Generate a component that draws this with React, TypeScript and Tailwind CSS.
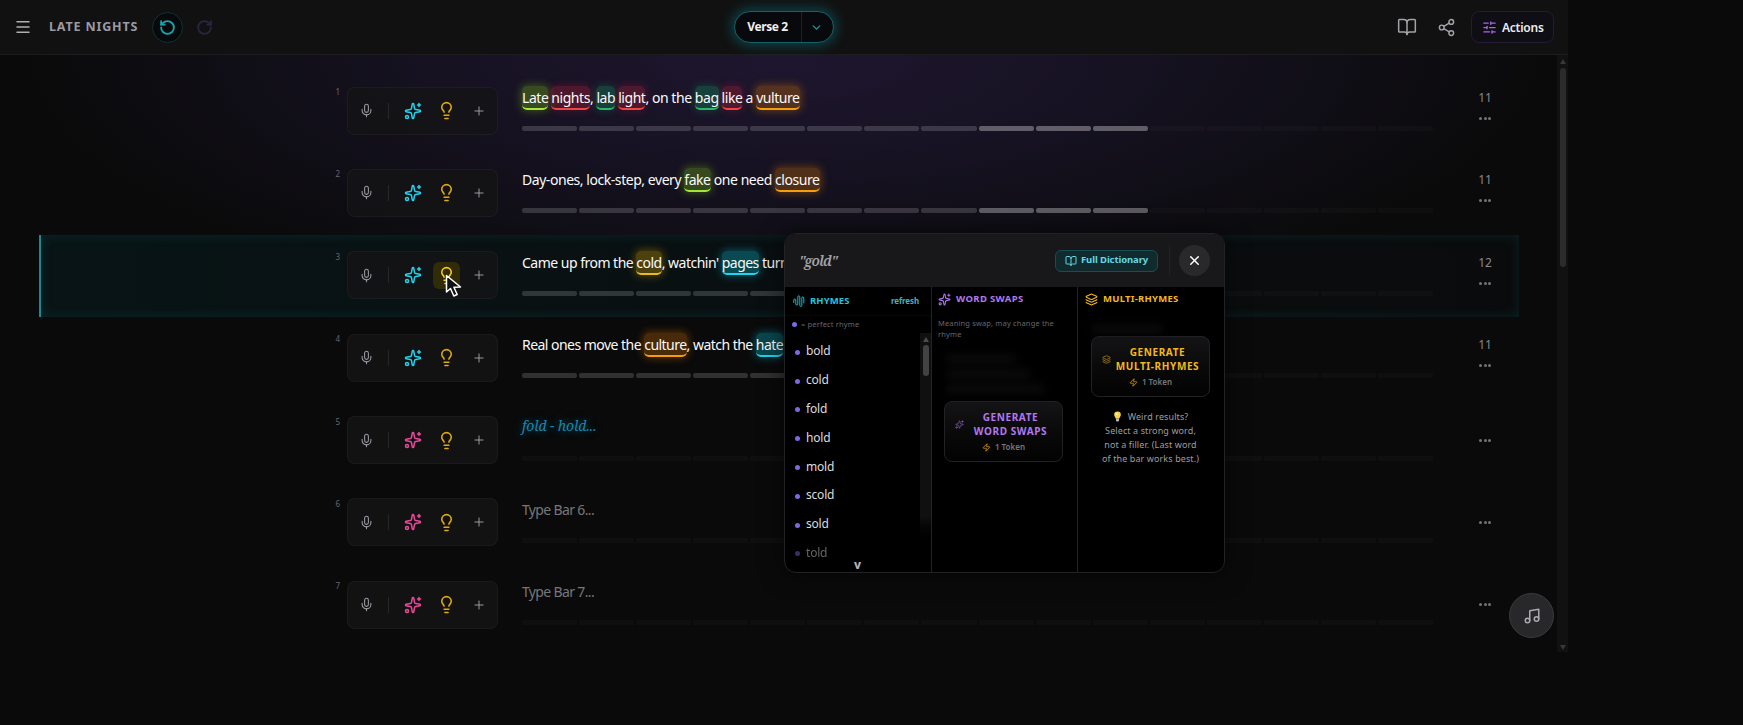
import clsx from 'clsx';
import {
    BookOpen,
    ChevronDown,
    Layers,
    Lightbulb,
    Menu,
    Mic,
    Music,
    Plus,
    RotateCcw,
    RotateCw,
    Share2,
    SlidersHorizontal,
    Sparkles,
    X,
    Zap,
} from 'lucide-react';

type Tone = 'lime' | 'red' | 'green' | 'orange' | 'yellow' | 'cyan';
type Word = string | [string, Tone, string];

interface Bar {
    words?: Word[];
    tracking?: string;
    hint?: string;
    placeholder?: string;
    count?: number;
    active?: boolean;
}

const TONES: Record<Tone, string> = {
    lime: 'bg-[#84cc16]/30 border-[#a3e635] shadow-[0_0_8px_1px_rgba(132,204,22,0.35)]',
    red: 'bg-[#dc2640]/27 border-[#ef4444] shadow-[0_0_8px_1px_rgba(225,29,72,0.22)]',
    green: 'bg-[#10b971]/27 border-[#2fb36c] shadow-[0_0_8px_1px_rgba(16,185,129,0.22)]',
    orange: 'bg-[#d97706]/30 border-[#f59e0b] shadow-[0_0_8px_1px_rgba(217,119,6,0.4)]',
    yellow: 'bg-[#ca9a04]/35 border-[#eab92b] shadow-[0_0_8px_1px_rgba(202,154,4,0.4)]',
    cyan: 'bg-[#0891a2]/45 border-[#22d3ee] shadow-[0_0_8px_1px_rgba(6,182,212,0.4)]',
};

// highlighted words are [text, tone, spacing]
const BARS: Bar[] = [
    {
        words: [
            ['Late', 'lime', 'mr-[3px]'], ['nights', 'red', ''], ', ', ['lab', 'green', 'mr-[3px]'], ['light', 'red', ''],
            ', on the ', ['bag', 'green', 'mr-[3px]'], ['like', 'red', ''], ' a ', ['vulture', 'orange', ''],
        ],
        tracking: 'tracking-[-0.45px]',
        count: 11,
    },
    {
        words: ['Day-ones, lock-step, every ', ['fake', 'lime', ''], ' one need ', ['closure', 'orange', '']],
        tracking: 'tracking-[-0.45px]',
        count: 11,
    },
    {
        words: ['Came up from the ', ['cold', 'yellow', ''], ", watchin' ", ['pages', 'cyan', ''], ' turn'],
        tracking: 'tracking-[-0.51px]',
        count: 12,
        active: true,
    },
    {
        words: ['Real ones move the ', ['culture', 'orange', ''], ', watch the ', ['hate', 'cyan', '']],
        tracking: 'tracking-[-0.53px]',
        count: 11,
    },
    { hint: 'fold - hold...' },
    { placeholder: 'Type Bar 6...' },
    { placeholder: 'Type Bar 7...' },
];

const RHYMES = ['bold', 'cold', 'fold', 'hold', 'mold', 'scold', 'sold', 'told'];

function Header() {
    return (
        <header className="flex h-[55px] items-center justify-between border-b border-[#1d1d20] bg-[#111111] px-[14px]">
            <div className="flex w-[600px] items-center">
                <Menu className="size-[18px] text-[#b0b0b4]" strokeWidth={2} />
                <h1 className="ml-[17px] w-[89px] whitespace-nowrap text-[12.5px] font-bold tracking-[0.85px] text-[#9b9ba2]">LATE NIGHTS</h1>
                <button className="ml-[14px] flex size-[31px] items-center justify-center rounded-full border border-[#0f3336] bg-[#07090b]">
                    <RotateCcw className="size-[17px] text-[#1ba3ae]" strokeWidth={2.6} />
                </button>
                <button className="ml-[6px] flex size-[30px] items-center justify-center">
                    <RotateCw className="size-[17px] text-[#2c2440]" strokeWidth={2.6} />
                </button>
            </div>
            <div className="flex h-8 w-[100px] items-center rounded-full border border-[#17606a] bg-[#08090c] shadow-[0_0_12px_3px_rgba(8,145,160,0.38)]">
                <span className="w-[66px] pr-px text-center text-[12px] font-bold tracking-[-0.4px] text-[#f1f1f3]">Verse 2</span>
                <span className="h-full w-px bg-[#14262b]" />
                <ChevronDown className="ml-[8px] size-[13px] text-[#1d9aa5]" strokeWidth={2.4} />
            </div>
            <div className="flex w-[600px] items-center justify-end">
                <BookOpen className="size-[20px] text-[#a3a3aa]" strokeWidth={1.8} />
                <Share2 className="ml-[20px] mr-px size-[19px] text-[#a3a3aa]" strokeWidth={1.8} />
                <button className="ml-[14px] flex h-8 w-[83px] items-center rounded-lg border border-[#231c33] bg-[#100e15] pl-[10px]">
                    <SlidersHorizontal className="size-[15px] text-[#a368e8]" />
                    <span className="ml-[5px] pt-px text-[12px] font-semibold tracking-[-0.25px] text-[#ececee]">Actions</span>
                </button>
            </div>
        </header>
    );
}

function Tools({ filled, active }: { filled: boolean; active?: boolean }) {
    return (
        <div className="mt-[16.5px] flex h-[48px] w-[151px] items-center rounded-lg border border-white/4 bg-[#141415]/80">
            <Mic className="ml-[11px] size-[15px] text-[#9c9ca3]" strokeWidth={1.7} />
            <span className="ml-[14px] h-4 w-px bg-[#27272a]" />
            <Sparkles className={clsx('ml-[14.5px] size-[18px]', filled ? 'text-[#22d3ee]' : 'text-[#ec4899]')} />
            <span className={clsx('ml-[11.5px] flex size-[27px] items-center justify-center rounded-md', active && 'bg-[#322b08]')}>
                <Lightbulb className={clsx('size-[19px]', active ? 'text-[#facc15]' : 'text-[#e0aa10]')} />
            </span>
            <Plus className="ml-[11.5px] size-[14px] text-[#a1a1aa]" strokeWidth={1.6} />
        </div>
    );
}

function Segments({ filled }: { filled: number }) {
    return (
        <div className="mt-[16px] grid h-[5px] w-[911px] grid-cols-16 gap-[2px]">
            {Array.from({ length: 16 }, (_, i) => (
                <span
                    key={i}
                    className={clsx('rounded-[2px]', i >= filled ? 'bg-white/[0.022]' : i >= 8 ? 'bg-white/[0.32]' : 'bg-white/[0.16]')}
                />
            ))}
        </div>
    );
}

function BarRow({ bar, index }: { bar: Bar; index: number }) {
    return (
        <div
            className={clsx(
                'flex h-[82.4px] w-[1480px] border-l-2',
                bar.active
                    ? 'border-[#1a8995] bg-linear-to-r from-[#081416] to-[#0a0b0c] shadow-[inset_0_0_12px_rgba(16,120,130,0.22)]'
                    : 'border-transparent',
            )}
        >
            <span className="w-[306px] pr-[7px] pt-[16px] text-right text-[8px] leading-[12px] text-[#67676e]">{index + 1}</span>
            <Tools filled={!!bar.words} active={bar.active} />
            <div className="ml-[24px] w-[912px] pt-[16px]">
                <div className={clsx('h-6 whitespace-pre text-[14px] leading-[24px] text-[#fafafa]', bar.tracking)}>
                    {bar.words?.map((word, i) =>
                        typeof word === 'string' ? (
                            <span key={i}>{word}</span>
                        ) : (
                            <span key={i} className={clsx('inline-block h-6 rounded-[5px] border-b-2', TONES[word[1]], word[2])}>
                                {word[0]}
                            </span>
                        ),
                    )}
                    {bar.hint && (
                        <span className="relative -top-[2px] font-['Noto_Serif','DejaVu_Serif',serif] text-[14px] italic tracking-[-0.1px] text-[#1786ad] [text-shadow:0_0_8px_rgba(14,150,200,0.6)]">
                            {bar.hint}
                        </span>
                    )}
                    {bar.placeholder && <span className="tracking-[-0.65px] text-[#77777b]">{bar.placeholder}</span>}
                </div>
                <Segments filled={bar.words ? 11 : 0} />
            </div>
            <div className={clsx('ml-[37px] flex w-[28px] flex-col items-center', bar.count ? 'pt-[16px]' : 'pt-[32px]')}>
                {bar.count && <span className="text-[12px] leading-[24px] text-[#88888d]">{bar.count}</span>}
                <span className="flex h-[17px] items-center gap-[1.5px]">
                    <i className="size-[3px] rounded-full bg-[#747478]" />
                    <i className="size-[3px] rounded-full bg-[#747478]" />
                    <i className="size-[3px] rounded-full bg-[#747478]" />
                </span>
            </div>
        </div>
    );
}

function PageScrollbar() {
    return (
        <div className="flex h-full w-[11px] flex-col items-center bg-[#111111]">
            <span className="mt-[4px] border-x-[3px] border-b-[5px] border-x-transparent border-b-[#38383a]" />
            <span className="mt-[4px] h-[199px] w-[6px] rounded-sm bg-[#2b2b2c]" />
            <span className="mb-[2px] mt-auto border-x-[3px] border-t-[5px] border-x-transparent border-t-[#38383a]" />
        </div>
    );
}

function GenerateButton({ kind }: { kind: 'swaps' | 'multi' }) {
    const Icon = kind === 'swaps' ? Sparkles : Layers;
    return (
        <button
            className={clsx(
                'flex h-[61px] w-[119px] flex-col items-center rounded-lg border border-[#222224] bg-linear-to-b from-[#141416] to-[#030303] pt-[8px]',
                kind === 'swaps' ? 'text-[#b178f0]' : 'text-[#f4b917]',
            )}
        >
            <span className="flex items-center gap-[5px]">
                <Icon className="size-[9px] opacity-70" />
                <span className="w-[84px] whitespace-nowrap text-center text-[10px] font-bold leading-[14px] tracking-[0.6px]">
                    GENERATE
                    <br />
                    {kind === 'swaps' ? 'WORD SWAPS' : 'MULTI-RHYMES'}
                </span>
            </span>
            <span className="mt-[3px] flex items-center gap-[4px] text-[8px] font-semibold leading-[12px] text-[#77777c]">
                <Zap className="size-[9px] text-[#e0a514]" />1 Token
            </span>
        </button>
    );
}

function WaveIcon() {
    return (
        <svg viewBox="0 0 12 12" className="size-[12px]" fill="none" stroke="currentColor" strokeWidth="0.9" strokeLinecap="round">
            <path d="M.8 7.500V5a1 1 0 0 1 2 0v4a1 1 0 0 0 2 0V1.800a1 1 0 0 1 2 0v8.600a1 1 0 0 0 2 0V3a1 1 0 0 1 2 0v5" />
        </svg>
    );
}

function BulbGlyph() {
    return (
        <svg viewBox="0 0 10 12" className="mr-[6px] inline-block h-[11px] w-[9px] align-[-2px]">
            <path d="M5 .5a3.7 3.7 0 0 1 3.7 3.7C8.7 6 7.2 6.500 6.900 8.400H3.100C2.800 6.500 1.300 6 1.300 4.200A3.700 3.700 0 0 1 5 .5Z" fill="#fcd34d" />
            <path d="M3.300 8.700h3.400v2L5.900 11.600H4.100l-.8-.9Z" fill="#b8b8b8" />
            <circle cx="4" cy="3.200" r="1.200" fill="#fff3b0" />
        </svg>
    );
}

function RhymePopup() {
    return (
        <div className="absolute left-[784px] top-[233px] h-[340px] w-[441px] overflow-hidden rounded-xl border border-[#232325] bg-black shadow-[0_0_24px_rgba(0,0,0,0.6)]">
            <div className="flex h-[53px] items-center bg-[#18181a] px-[14px]">
                <span className="font-['Noto_Serif','DejaVu_Serif',serif] text-[14px] font-semibold italic tracking-[-0.75px] text-[#a3a3aa]">"gold"</span>
                <span className="ml-auto flex h-[22px] w-[103px] items-center rounded-md border border-[#164e55] bg-[#102a2e] pl-[9px] text-[#63d8e4]">
                    <BookOpen className="size-[12px]" />
                    <span className="ml-[4px] whitespace-nowrap text-[9.5px] font-bold tracking-[-0.1px]">Full Dictionary</span>
                </span>
                <span className="ml-[11px] h-[31px] w-px bg-[#222225]" />
                <button className="ml-[9px] flex size-[31px] items-center justify-center rounded-full bg-[#29292b]">
                    <X className="size-[15px] text-white" strokeWidth={2.4} />
                </button>
            </div>
            <div className="grid h-[286px] grid-cols-[147px_146px_146px]">
                <section className="flex flex-col border-r border-[#232325]">
                    <div className="flex h-[29px] items-center border-b border-[#080809] pl-[8px] pr-[12px] text-[#22c5dc]">
                        <WaveIcon />
                        <h2 className="ml-[5px] text-[9.5px] font-bold tracking-[0.1px]">RHYMES</h2>
                        <span className="ml-auto text-[8px] font-bold tracking-[-0.1px] text-[#4aaebb]">refresh</span>
                    </div>
                    <p className="flex h-[17px] items-center whitespace-nowrap pl-[7px] text-[7.5px] tracking-[0.15px] text-[#66666c]">
                        <i className="mr-[4px] size-[5px] rounded-full bg-[#8165e6]" />= perfect rhyme
                    </p>
                    <div className="flex min-h-0 flex-1">
                        <ul className="flex-1 pl-[10px] pt-[4px]">
                            {RHYMES.map((rhyme) => (
                                <li
                                    key={rhyme}
                                    className={clsx('flex h-[28.8px] items-center text-[12px] tracking-[-0.2px] text-[#dcdcde]', rhyme === 'told' && 'opacity-45')}
                                >
                                    <i className="mr-[6px] mt-[2px] size-[5px] rounded-full bg-[#8165e6]" />
                                    {rhyme}
                                </li>
                            ))}
                        </ul>
                        <div className="flex h-[216px] w-[11px] flex-col items-center bg-linear-to-b from-[#101011] from-85% to-black">
                            <span className="mt-[4px] border-x-[3px] border-b-[5px] border-x-transparent border-b-[#4c4c4f]" />
                            <span className="mt-[3px] h-[31px] w-[6px] rounded-full bg-[#424244]" />
                        </div>
                    </div>
                    <span className="absolute bottom-0 left-[69px] text-[12px] font-extrabold leading-[15px] text-[#b4b4b8]">v</span>
                </section>
                <section className="flex flex-col border-r border-[#232325]">
                    <div className="flex h-[25px] items-center pl-[6px] text-[#b178f0]">
                        <Sparkles className="size-[13px]" />
                        <h2 className="ml-[5px] text-[9.5px] font-bold tracking-[0.35px]">WORD SWAPS</h2>
                    </div>
                    <p className="mt-[6px] whitespace-nowrap pl-[6px] text-[7.5px] leading-[11px] tracking-[0.15px] text-[#66666c]">
                        Meaning swap, may change the
                        <br />
                        rhyme
                    </p>
                    <div className="ml-[14px] mt-[15px] flex flex-col gap-[7px] blur-[4px]">
                        <span className="h-[8px] w-[70px] bg-[#0c0c0c]" />
                        <span className="h-[8px] w-[84px] bg-[#0c0c0c]" />
                        <span className="h-[8px] w-[98px] bg-[#0c0c0c]" />
                    </div>
                    <div className="ml-[12px] mt-[8px]">
                        <GenerateButton kind="swaps" />
                    </div>
                </section>
                <section className="flex flex-col">
                    <div className="flex h-[25px] items-center pl-[7px] text-[#f4b917]">
                        <Layers className="size-[13px]" />
                        <h2 className="ml-[5px] text-[9.5px] font-bold tracking-[0.25px]">MULTI-RHYMES</h2>
                    </div>
                    <span className="ml-[14px] mt-[13px] h-[8px] w-[70px] bg-[#0c0c0c] blur-[4px]" />
                    <div className="ml-[13px] mt-[3px]">
                        <GenerateButton kind="multi" />
                    </div>
                    <p className="mt-[13px] pr-px text-center text-[9px] leading-[14px] tracking-[0.1px] text-[#9d9da3]">
                        <BulbGlyph />
                        Weird results?
                        <br />
                        Select a strong word,
                        <br />
                        not a filler. (Last word
                        <br />
                        of the bar works best.)
                    </p>
                </section>
            </div>
        </div>
    );
}

function Pointer() {
    return (
        <svg viewBox="0 0 18 24" className="pointer-events-none absolute left-[445px] top-[274px] h-[24px] w-[18px]">
            <path d="M1.500 1.500V18l4-3.500 3.300 7.500 3.400-1.500-3.300-7.300 6.600-.2Z" fill="#111" stroke="#fff" strokeWidth="1.500" strokeLinejoin="round" />
        </svg>
    );
}

export default function App() {
    return (
        <div className="relative h-[725px] w-[1743px] overflow-hidden bg-[#0a0a0a] font-['Noto_Sans',sans-serif]">
            <div className="w-[1568px]">
                <Header />
                <main className="flex h-[597px] justify-between overflow-hidden bg-[radial-gradient(ellipse_760px_260px_at_50%_0%,#1f162f_0%,#161222_45%,#0a0a0a_100%)]">
                    <div className="pl-[39px] pt-[15px]">
                        {BARS.map((bar, i) => (
                            <BarRow key={i} bar={bar} index={i} />
                        ))}
                    </div>
                    <PageScrollbar />
                </main>
            </div>
            <RhymePopup />
            <button className="absolute left-[1509px] top-[593px] flex size-[45px] items-center justify-center rounded-full border border-[#3b3b3e] bg-[#28282b]">
                <Music className="size-[18px] text-[#aaaaaf]" />
            </button>
            <Pointer />
        </div>
    );
}
